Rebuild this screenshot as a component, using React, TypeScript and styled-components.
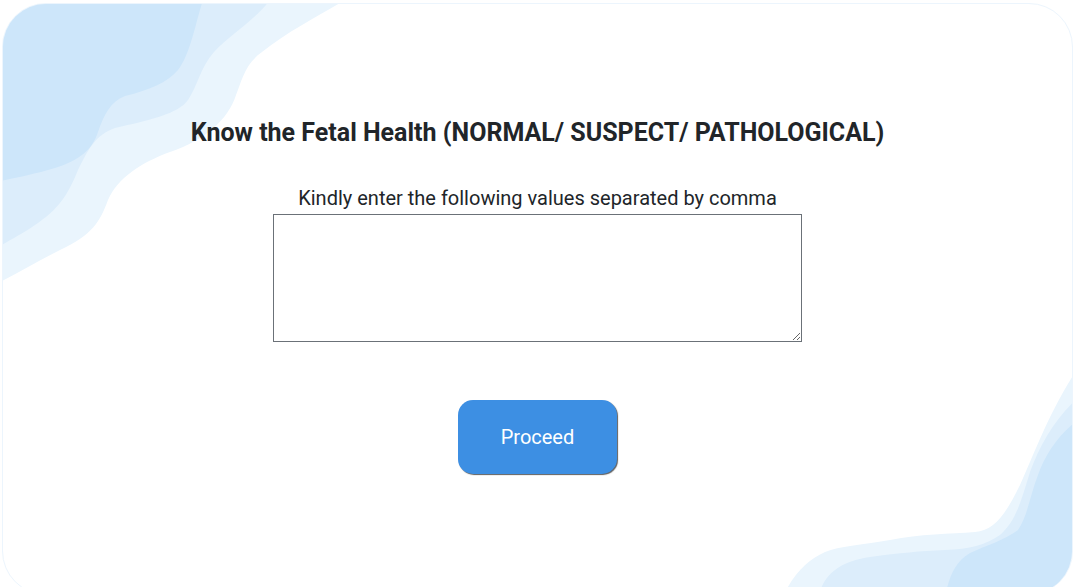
import React from "react";
import styled, { createGlobalStyle } from "styled-components";

const Global = createGlobalStyle`
  html, body { margin: 0; padding: 0; background: #ffffff; overflow: hidden; }
  body { font-family: Roboto, "Liberation Sans", Arial, sans-serif; }
`;

const Page = styled.div`
  width: 1078px;
  height: 587px;
  overflow: hidden;
  background: #ffffff;
`;

const Card = styled.main`
  position: relative;
  margin: 3px 0 0 2px;
  width: 1071px;
  height: 592px;
  box-sizing: border-box;
  border: 1px solid #ecf5fd;
  border-radius: 44px;
  overflow: hidden;
  background: #ffffff;
  display: flex;
  flex-direction: column;
  align-items: center;
`;

const Waves = styled.svg`
  position: absolute;
  left: -3px;
  top: -4px;
  width: 1078px;
  height: 596px;
  pointer-events: none;
`;

const Content = styled.section`
  position: relative;
  display: flex;
  flex-direction: column;
  align-items: center;
  padding-top: 113px;
`;

const Title = styled.h1`
  margin: 0;
  font-family: Roboto, "Liberation Sans", sans-serif;
  font-weight: 700;
  font-size: 25px;
  line-height: 32px;
  color: #212529;
`;

const Label = styled.label`
  margin-top: 37px;
  font-family: Roboto, "Liberation Sans", sans-serif;
  font-weight: 400;
  font-size: 20px;
  line-height: 24px;
  color: #212529;
`;

const Area = styled.textarea`
  margin-top: 4px;
  width: 529px;
  height: 128px;
  box-sizing: border-box;
  border: 1px solid #6b7178;
  border-radius: 0;
  background: #ffffff;
  resize: both;
  font-family: Roboto, sans-serif;
  font-size: 16px;
`;

const Button = styled.button`
  margin-top: 58px;
  width: 159px;
  height: 74px;
  border: none;
  border-radius: 15px;
  background: #3d8fe3;
  color: #ffffff;
  font-family: Roboto, "Liberation Sans", sans-serif;
  font-size: 20px;
  box-shadow: 1px 1px 1px rgba(40, 40, 40, 0.75);
  cursor: pointer;
`;

export default function App() {
  return (
    <Page>
      <Global />
      <Card>
        <Waves viewBox="0 0 1078 596" aria-hidden>
          <path
            d="M0,0 L345,0 C320,15 290,30 262,52 C245,64 242,80 236,95 C228,120 205,140 170,152 C140,163 118,178 108,200 C100,222 92,235 60,250 C40,260 20,272 0,282 Z"
            fill="#eaf5fd"
          />
          <path
            d="M0,0 L270,0 C255,20 230,35 214,52 C200,68 198,85 188,100 C178,114 150,120 115,128 C95,135 88,150 78,170 C68,195 58,210 35,225 C22,234 10,240 0,246 Z"
            fill="#dcedfb"
          />
          <path
            d="M0,0 L203,0 C195,25 190,55 178,70 C168,82 150,90 125,96 C110,102 104,115 98,132 C92,150 80,160 55,168 C35,174 15,178 0,181 Z"
            fill="#cde6fa"
          />
          <path
            d="M783,596 C795,572 808,560 825,552 C840,546 860,545 890,540 C920,534 950,534 975,532 C995,530 1005,515 1020,485 C1035,452 1050,410 1078,368 L1078,596 Z"
            fill="#eaf5fd"
          />
          <path
            d="M818,596 C826,572 840,562 870,557 C900,553 920,551 945,550 C970,549 985,545 1000,535 C1015,522 1020,505 1030,472 C1040,445 1055,418 1078,398 L1078,596 Z"
            fill="#dcedfb"
          />
          <path
            d="M945,596 C950,575 955,562 970,553 C985,546 1005,540 1018,530 C1028,515 1030,495 1038,475 C1045,455 1058,435 1078,420 L1078,596 Z"
            fill="#cde6fa"
          />
        </Waves>
        <Content>
          <Title>Know the Fetal Health (NORMAL/ SUSPECT/ PATHOLOGICAL)</Title>
          <Label htmlFor="values">Kindly enter the following values separated by comma</Label>
          <Area id="values" />
          <Button type="button">Proceed</Button>
        </Content>
      </Card>
    </Page>
  );
}
